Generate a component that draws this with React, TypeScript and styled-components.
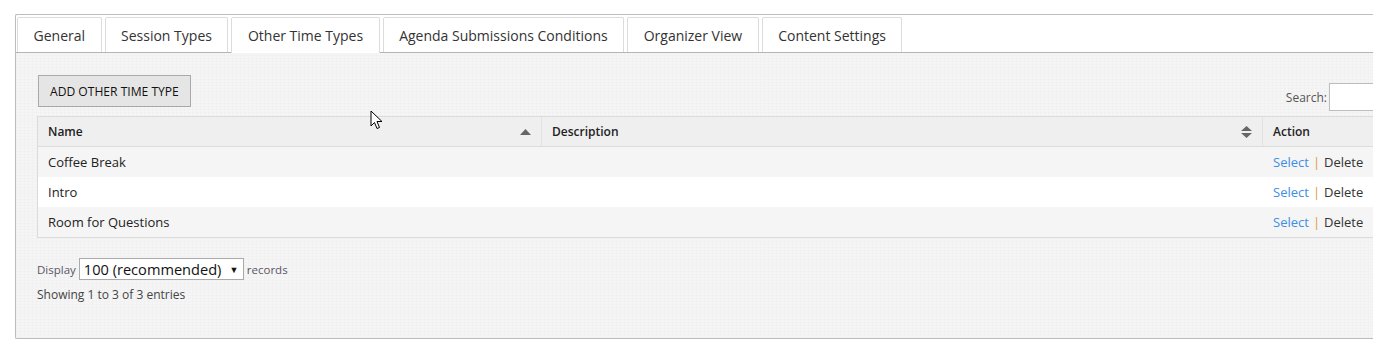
import React from "react";
import styled, { createGlobalStyle } from "styled-components";

const GlobalStyle = createGlobalStyle`
	html, body {
		margin: 0;
		padding: 0;
		background: #fff;
		overflow: hidden;
	}
	body {
		font-family: "Open Sans", "Liberation Sans", sans-serif;
		color: #222;
	}
`;

const Page = styled.div`
	padding: 14px 0 0 15px;
	width: 1500px;
	position: relative;
`;

const Panel = styled.div`
	width: 1480px;
	border: 1px solid #bdbdbd;
	border-right: none;
	border-radius: 2px 0 0 2px;
	background: #fff;
	padding-top: 2px;
`;

const TabStrip = styled.div`
	display: flex;
	gap: 3px;
	padding-left: 1px;
	border-bottom: 1px solid #b4b4b4;
`;

const Tab = styled.div<{ $active?: boolean }>`
	display: flex;
	align-items: center;
	padding: 0 15.5px;
	font-size: 14px;
	color: #333;
	background: #fff;
	border: 1px solid #dcdcdc;
	border-bottom: none;
	border-radius: 2px 2px 0 0;
	margin-bottom: ${(p) => (p.$active ? "-1px" : "0")};
	height: ${(p) => (p.$active ? "35px" : "34px")};
	cursor: pointer;
`;

const Content = styled.div`
	background-color: #f5f5f5;
	background-image: repeating-linear-gradient(
			0deg,
			rgba(0, 0, 0, 0.012) 0px,
			rgba(0, 0, 0, 0.012) 1px,
			transparent 1px,
			transparent 3px
		),
		repeating-linear-gradient(
			90deg,
			rgba(0, 0, 0, 0.012) 0px,
			rgba(0, 0, 0, 0.012) 1px,
			transparent 1px,
			transparent 4px
		);
	padding: 22px 0 35px 21px;
`;

const Toolbar = styled.div`
	display: flex;
	align-items: flex-end;
	justify-content: space-between;
	width: 1442px;
`;

const AddButton = styled.button`
	margin: 0 0 4px 1px;
	height: 32px;
	padding: 0 11px;
	background: #e5e5e5;
	border: 1px solid #a9a9a9;
	border-radius: 0;
	font-family: "Open Sans", "Liberation Sans", sans-serif;
	font-size: 12.1px;
	color: #111;
	cursor: pointer;
`;

const SearchLabel = styled.label`
	display: flex;
	align-items: center;
	gap: 2px;
	font-size: 12px;
	color: #555;
	padding-top: 4px;
`;

const SearchInput = styled.input`
	width: 150px;
	height: 28px;
	box-sizing: border-box;
	border: 1px solid #bdbdbd;
	background: #fff;
	margin: 0;
`;

const Table = styled.div`
	margin-top: 5px;
	width: 1400px;
	border: 1px solid #dcdcdc;
	display: grid;
	grid-template-columns: 504px 721px 1fr;
`;

const HeadCell = styled.div<{ $last?: boolean }>`
	height: 29px;
	display: flex;
	align-items: center;
	justify-content: space-between;
	padding: 0 10px;
	background: #efefef;
	border-bottom: 1px solid #dcdcdc;
	border-right: ${(p) => (p.$last ? "none" : "1px solid #e2e2e2")};
	font-size: 12px;
	font-weight: 600;
	color: #222;
`;

const Cell = styled.div<{ $odd: boolean }>`
	height: 30px;
	display: flex;
	align-items: center;
	padding: 0 10px;
	background: ${(p) => (p.$odd ? "#f5f5f5" : "#fff")};
	font-size: 13px;
	color: #222;
`;

const SelectLink = styled.a`
	color: #3d8ee6;
	text-decoration: none;
	cursor: pointer;
`;

const Pipe = styled.span`
	color: #d99a3a;
	margin: 0 4px;
`;

const DeleteLink = styled.a`
	color: #333;
	cursor: pointer;
`;

const SortIcon = styled.svg`
	width: 11px;
	height: 12px;
	fill: #666;
`;

const Footer = styled.div`
	margin-top: 20px;
	font-size: 12px;
	color: #555;
`;

const DisplayRow = styled.div`
	display: flex;
	align-items: center;
	gap: 3px;
	height: 22px;
	font-size: 11.5px;
	color: #5a5566;
`;

const PageSize = styled.div`
	height: 22px;
	width: 165px;
	box-sizing: border-box;
	border: 1px solid #aaa;
	background: #fff;
	display: flex;
	align-items: center;
	padding: 0 4px;
	font-size: 14.6px;
	color: #111;
	gap: 8px;
	white-space: nowrap;
`;

const Caret = styled.span`
	font-size: 9px;
	color: #111;
`;

const Info = styled.div`
	margin-top: 7px;
	line-height: 16px;
	color: #444;
`;

const Cursor = styled.svg`
	position: absolute;
	left: 370px;
	top: 110px;
	width: 13px;
	height: 20px;
`;

const tabs = [
	"General",
	"Session Types",
	"Other Time Types",
	"Agenda Submissions Conditions",
	"Organizer View",
	"Content Settings",
];

const rows = ["Coffee Break", "Intro", "Room for Questions"];

export default function App() {
	return (
		<>
			<GlobalStyle />
			<Page>
				<Panel>
					<TabStrip>
						{tabs.map((t) => (
							<Tab key={t} $active={t === "Other Time Types"}>
								{t}
							</Tab>
						))}
					</TabStrip>
					<Content>
						<Toolbar>
							<AddButton>ADD OTHER TIME TYPE</AddButton>
							<SearchLabel>
								Search:
								<SearchInput type="text" />
							</SearchLabel>
						</Toolbar>
						<Table>
							<HeadCell>
								Name
								<SortIcon viewBox="0 0 11 12">
									<path d="M0 9 L5.5 3 L11 9 Z" />
								</SortIcon>
							</HeadCell>
							<HeadCell>
								Description
								<SortIcon viewBox="0 0 11 12">
									<path d="M0 5 L5.5 0 L11 5 Z M0 7 L11 7 L5.5 12 Z" />
								</SortIcon>
							</HeadCell>
							<HeadCell $last>Action</HeadCell>
							{rows.map((r, i) => (
								<React.Fragment key={r}>
									<Cell $odd={i % 2 === 0}>{r}</Cell>
									<Cell $odd={i % 2 === 0} />
									<Cell $odd={i % 2 === 0}>
										<SelectLink>Select</SelectLink>
										<Pipe>|</Pipe>
										<DeleteLink>Delete</DeleteLink>
									</Cell>
								</React.Fragment>
							))}
						</Table>
						<Footer>
							<DisplayRow>
								Display
								<PageSize>
									100 (recommended)
									<Caret>▼</Caret>
								</PageSize>
								records
							</DisplayRow>
							<Info>Showing 1 to 3 of 3 entries</Info>
						</Footer>
					</Content>
				</Panel>
				<Cursor viewBox="0 0 13 20">
					<path
						d="M1 1 L1 16 L4.5 12.5 L7 18.5 L9.5 17.5 L7 11.5 L12 11.5 Z"
						fill="#fff"
						stroke="#000"
						strokeWidth="1"
						strokeLinejoin="round"
					/>
				</Cursor>
			</Page>
		</>
	);
}
